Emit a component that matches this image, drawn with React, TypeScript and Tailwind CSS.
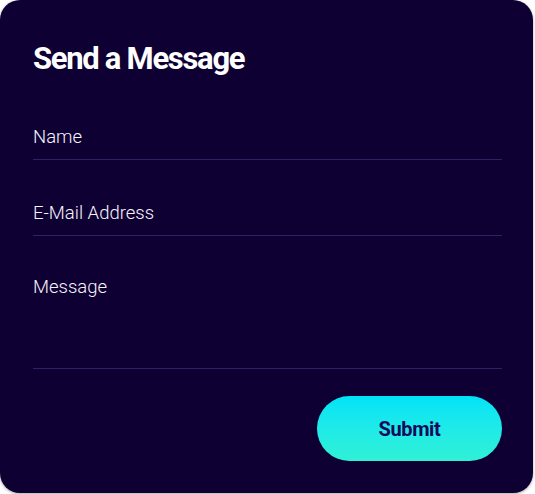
import React from 'react';

const fields = [
  { name: 'name', label: 'Name', type: 'text' },
  { name: 'email', label: 'E-Mail Address', type: 'email' },
];

const App = () => {
  return (
    <div className="w-[535px] h-[494px] bg-white">
      <form
        className="w-[533px] h-[493px] rounded-[20px] bg-[#0f0033] pl-[33px] pr-[31px] pt-[41px] shadow-[0_1px_3px_rgba(0,0,0,0.35)]"
        onSubmit={(e) => e.preventDefault()}
      >
        <h2 className="text-[31px] leading-[36px] font-bold text-white tracking-[-1.3px] font-['Roboto',sans-serif]">
          Send a Message
        </h2>
        <div className="mt-[7px]">
          {fields.map((f) => (
            <div key={f.name} className="border-b border-[#2b2363] pt-[42px] pb-[11px]">
              <input
                type={f.type}
                name={f.name}
                placeholder={f.label}
                className="block w-full bg-transparent outline-none text-[18.5px] leading-[22px] font-light text-white placeholder:text-[#f5f3fc] font-['Roboto',sans-serif]"
              />
            </div>
          ))}
          <div className="border-b border-[#2b2363] pt-[40px] h-[133px]">
            <textarea
              name="message"
              placeholder="Message"
              className="block w-full h-[80px] resize-none bg-transparent outline-none text-[18.5px] leading-[22px] font-light text-white placeholder:text-[#f5f3fc] font-['Roboto',sans-serif]"
            />
          </div>
        </div>
        <div className="flex justify-end mt-[27px]">
          <button
            type="submit"
            className="w-[185px] h-[65px] rounded-full bg-gradient-to-b from-[#00e3f8] to-[#30f1d6] text-[#160a5c] text-[20px] font-bold tracking-[-0.4px] font-['Roboto',sans-serif]"
          >
            Submit
          </button>
        </div>
      </form>
    </div>
  );
};

export default App;
